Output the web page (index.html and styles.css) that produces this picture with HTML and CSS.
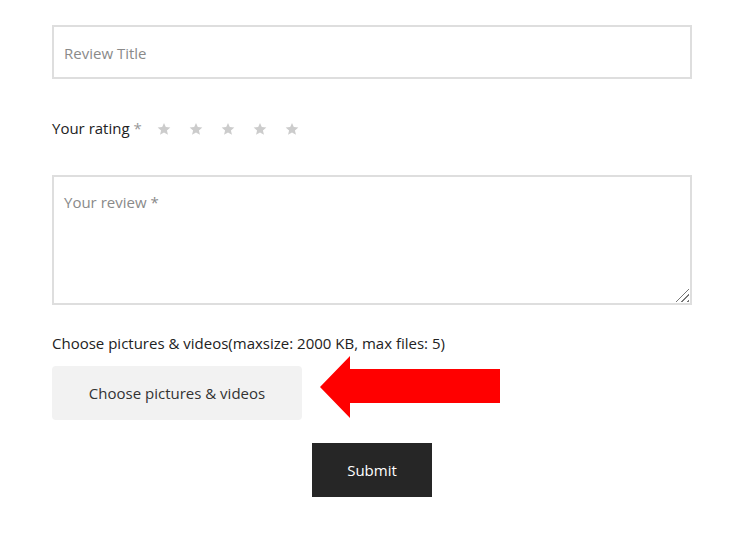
FILE: index.html
```html
<!DOCTYPE html>
<html>
<head>
<meta charset="utf-8">
<link rel="stylesheet" href="styles.css">
</head>
<body>
<form class="review-form">
  <input class="field title-field" type="text" placeholder="Review Title">
  <div class="rating-row">
    <span class="rating-label">Your rating <span class="req">*</span></span>
    <div class="stars">
      <svg viewBox="0 0 24 24"><path d="M12 1.5l3.1 7.2 7.8.6-5.9 5.1 1.8 7.6L12 17.9 5.2 22l1.8-7.6L1.1 9.3l7.8-.6z"/></svg>
      <svg viewBox="0 0 24 24"><path d="M12 1.5l3.1 7.2 7.8.6-5.9 5.1 1.8 7.6L12 17.9 5.2 22l1.8-7.6L1.1 9.3l7.8-.6z"/></svg>
      <svg viewBox="0 0 24 24"><path d="M12 1.5l3.1 7.2 7.8.6-5.9 5.1 1.8 7.6L12 17.9 5.2 22l1.8-7.6L1.1 9.3l7.8-.6z"/></svg>
      <svg viewBox="0 0 24 24"><path d="M12 1.5l3.1 7.2 7.8.6-5.9 5.1 1.8 7.6L12 17.9 5.2 22l1.8-7.6L1.1 9.3l7.8-.6z"/></svg>
      <svg viewBox="0 0 24 24"><path d="M12 1.5l3.1 7.2 7.8.6-5.9 5.1 1.8 7.6L12 17.9 5.2 22l1.8-7.6L1.1 9.3l7.8-.6z"/></svg>
    </div>
  </div>
  <div class="review-wrap">
    <textarea class="field review-field" placeholder="Your review *"></textarea>
    <span class="resize-grip"></span>
  </div>
  <div class="upload-label">Choose pictures &amp; videos(maxsize: 2000 KB, max files: 5)</div>
  <div class="upload-row">
    <button type="button" class="upload-btn">Choose pictures &amp; videos</button>
    <svg class="arrow" width="182" height="64" viewBox="0 0 182 64"><polygon points="0,31 30,0 30,13 180,13 180,47 30,47 30,62" fill="#ff0000"/></svg>
  </div>
  <div class="submit-row">
    <button type="button" class="submit-btn">Submit</button>
  </div>
</form>
</body>
</html>
```

FILE: styles.css
```css
html, body {
  margin: 0;
  padding: 0;
  background: #ffffff;
}
body {
  font-family: "Open Sans", "Noto Sans", sans-serif;
  font-size: 15px;
  color: #222;
}
.review-form {
  width: 640px;
  margin-left: 52px;
  padding-top: 25px;
  display: flex;
  flex-direction: column;
}
.field {
  box-sizing: border-box;
  width: 640px;
  border: 2px solid #dedede;
  background: #fff;
  font-family: inherit;
  font-size: 15px;
  color: #333;
  padding: 0 10px;
  outline: none;
  margin: 0;
}
.field::placeholder {
  color: #8a8a8a;
  opacity: 1;
}
.title-field {
  height: 54px;
  padding-top: 2px;
}
.rating-row {
  display: flex;
  align-items: center;
  height: 30px;
  margin-top: 34px;
}
.rating-label {
  font-size: 15px;
  color: #222;
}
.req {
  color: #999;
}
.stars {
  display: flex;
  gap: 18px;
  margin-left: 15px;
  padding-top: 2px;
}
.stars svg {
  width: 14px;
  height: 14px;
  fill: #cccccc;
}
.review-wrap {
  position: relative;
  margin-top: 32px;
}
.review-field {
  height: 130px;
  padding-top: 15px;
  resize: none;
  display: block;
}
.resize-grip {
  position: absolute;
  right: 3px;
  bottom: 3px;
  width: 14px;
  height: 14px;
  background: repeating-linear-gradient(135deg, transparent 0 2px, #777 2px 3.2px, transparent 3.2px 4px);
  clip-path: polygon(100% 0, 100% 100%, 0 100%);
}
.upload-label {
  margin-top: 28px;
  line-height: 20px;
  font-size: 15px;
  color: #222;
}
.upload-row {
  display: flex;
  align-items: flex-start;
  margin-top: 13px;
}
.upload-btn {
  width: 250px;
  height: 54px;
  border: none;
  border-radius: 4px;
  background: #f2f2f2;
  font-family: inherit;
  font-size: 15px;
  color: #333;
  padding: 0;
}
.arrow {
  margin-left: 18px;
  margin-top: -10px;
  margin-bottom: 0;
  display: block;
  height: 64px;
  flex: none;
}
.submit-row {
  display: flex;
  justify-content: center;
  margin-top: 23px;
}
.submit-btn {
  width: 120px;
  height: 54px;
  border: none;
  background: #262626;
  color: #fff;
  font-family: inherit;
  font-size: 15px;
  padding: 0;
}
```
